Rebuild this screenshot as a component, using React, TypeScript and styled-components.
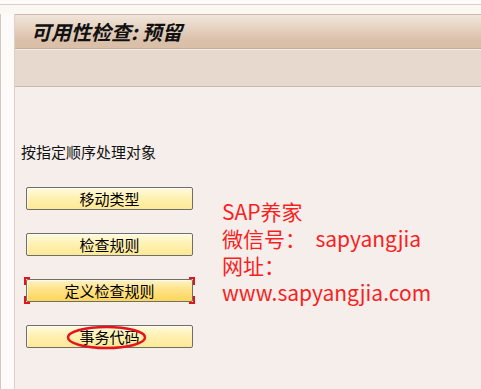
import { FC, ReactNode } from "react";
import styled, { createGlobalStyle } from "styled-components";

const GlobalStyle = createGlobalStyle`
    html, body {
        margin: 0;
        padding: 0;
        background: #fdfcfb;
    }

    body {
        font-family: "Noto Sans CJK SC", "Noto Sans", sans-serif;
    }
`;

const StyledScreen = styled.div`
    width: 481px;
    height: 389px;
    display: flex;
    flex-direction: column;
    overflow: hidden;
    background: #fdfcfb;
`;

const StyledTopStrip = styled.div`
    flex-shrink: 0;
    height: 9px;
    margin-top: 4px;
    border-top: 1px solid #d8cec7;
    background: #fbf7f2;
`;

const StyledBody = styled.div`
    flex: 1;
    display: flex;
`;

const StyledLeftRail = styled.div`
    width: 13px;
    border-left: 1px solid #d3c8c0;
    background: #fdfbfa;
`;

const StyledMain = styled.div`
    flex: 1;
    display: flex;
    flex-direction: column;
    border-left: 1px solid #dcd0c8;
    background: #f6eeeb;
`;

const StyledHeader = styled.div`
    height: 33px;
    display: flex;
    align-items: center;
    padding-left: 16px;
    border-top: 1px solid #cfbbad;
    border-bottom: 1px solid #c6ae9c;
    background: linear-gradient(#f1e5db, #dbc1aa 75%, #d9bfa8);
`;

const StyledTitle = styled.h1`
    margin: 0;
    font-size: 20px;
    font-weight: bold;
    font-style: italic;
    color: #111;
    line-height: 1;
`;

const StyledToolbar = styled.div`
    height: 37px;
    border-bottom: 1px solid #c9b8ad;
    background: #e8d9cf;
    box-shadow: inset 0 1px #f3ebe5;
`;

const StyledContent = styled.div`
    padding: 55px 0 0 6px;
`;

const StyledHint = styled.div`
    font-size: 15px;
    line-height: 20px;
    color: #111;
`;

const StyledRow = styled.div`
    display: flex;
    align-items: flex-start;
    margin: 25px 0 0 5px;
`;

const StyledButtons = styled.div`
    display: flex;
    flex-direction: column;
    gap: 23px;
`;

const StyledSlot = styled.div`
    position: relative;
`;

const StyledButton = styled.button<{ $focused?: boolean }>`
    box-sizing: border-box;
    display: block;
    width: 167px;
    height: 23px;
    padding: 0;
    border: 1px solid #6e6e6e;
    border-radius: 2px;
    font-family: "Noto Sans CJK SC", sans-serif;
    font-size: 15px;
    line-height: 20px;
    color: #000;
    background: ${(p) =>
        p.$focused
            ? "linear-gradient(#fff3c6, #ffe38a 45%, #ffd65a)"
            : "linear-gradient(#fffadf, #fff1b4 45%, #ffe996)"};
    box-shadow: inset 1px 1px rgba(255, 255, 255, 0.6);
`;

const StyledCorner = styled.span<{ $v: "top" | "bottom"; $h: "left" | "right" }>`
    position: absolute;
    width: 4px;
    height: 6px;
    ${(p) => p.$v}: -2px;
    ${(p) => p.$h}: -2px;
    border-${(p) => p.$v}: 2px solid #e5141b;
    border-${(p) => p.$h}: 2px solid #e5141b;
`;

const StyledMark = styled.svg`
    position: absolute;
    left: 40px;
    top: 0;
    overflow: visible;
    pointer-events: none;
`;

const StyledInfo = styled.div`
    margin: 11px 0 0 29px;
    font-size: 21px;
    line-height: 27px;
    color: #f81f1f;
    white-space: pre;
`;

const StyledInfoLine = styled.div`
    height: 27px;
`;

const FocusFrame: FC<{ children: ReactNode }> = ({ children }) => (
    <StyledSlot>
        {children}
        <StyledCorner $v="top" $h="left" />
        <StyledCorner $v="top" $h="right" />
        <StyledCorner $v="bottom" $h="left" />
        <StyledCorner $v="bottom" $h="right" />
    </StyledSlot>
);

const App: FC = () => {
    return (
        <StyledScreen>
            <GlobalStyle />
            <StyledTopStrip />
            <StyledBody>
                <StyledLeftRail />
                <StyledMain>
                    <StyledHeader>
                        <StyledTitle>可用性检查: 预留</StyledTitle>
                    </StyledHeader>
                    <StyledToolbar />
                    <StyledContent>
                        <StyledHint>按指定顺序处理对象</StyledHint>
                        <StyledRow>
                            <StyledButtons>
                                <StyledSlot>
                                    <StyledButton>移动类型</StyledButton>
                                </StyledSlot>
                                <StyledSlot>
                                    <StyledButton>检查规则</StyledButton>
                                </StyledSlot>
                                <FocusFrame>
                                    <StyledButton $focused>定义检查规则</StyledButton>
                                </FocusFrame>
                                <StyledSlot>
                                    <StyledButton>事务代码</StyledButton>
                                    <StyledMark width="81" height="24" viewBox="0 0 81 24">
                                        <ellipse
                                            cx="40.5"
                                            cy="12.5"
                                            rx="38.5"
                                            ry="10.5"
                                            fill="none"
                                            stroke="#e5141b"
                                            strokeWidth="2.5"
                                        />
                                    </StyledMark>
                                </StyledSlot>
                            </StyledButtons>
                            <StyledInfo>
                                <StyledInfoLine>SAP养家</StyledInfoLine>
                                <StyledInfoLine>微信号：  sapyangjia</StyledInfoLine>
                                <StyledInfoLine>网址：</StyledInfoLine>
                                <StyledInfoLine>www.sapyangjia.com</StyledInfoLine>
                            </StyledInfo>
                        </StyledRow>
                    </StyledContent>
                </StyledMain>
            </StyledBody>
        </StyledScreen>
    );
};

export default App;
